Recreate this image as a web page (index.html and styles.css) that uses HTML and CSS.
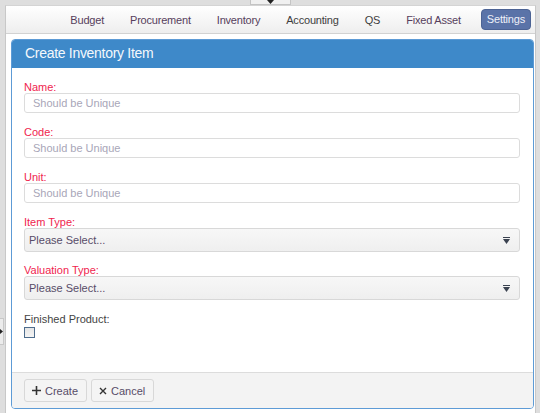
FILE: index.html
```html
<!DOCTYPE html>
<html>
<head>
<meta charset="utf-8">
<link rel="stylesheet" href="styles.css">
</head>
<body>
<div class="topstrip"><div class="handle"><svg width="7" height="4" viewBox="0 0 7 4"><path d="M0 0h7L3.5 4z" fill="#222"/></svg></div></div>
<div class="sidetab"><svg width="3" height="5" viewBox="0 0 3 5"><path d="M0 0v5l3-2.5z" fill="#222"/></svg></div>
<div class="frame">
  <nav class="nav">
    <a class="nav-item visited">Budget</a>
    <a class="nav-item visited">Procurement</a>
    <a class="nav-item visited">Inventory</a>
    <a class="nav-item">Accounting</a>
    <a class="nav-item">QS</a>
    <a class="nav-item visited">Fixed Asset</a>
    <a class="nav-btn">Settings</a>
  </nav>
  <div class="panel">
    <div class="panel-head">Create Inventory Item</div>
    <div class="panel-body">
      <div class="group">
        <label class="lbl req">Name:</label>
        <div class="input">Should be Unique</div>
      </div>
      <div class="group">
        <label class="lbl req">Code:</label>
        <div class="input">Should be Unique</div>
      </div>
      <div class="group">
        <label class="lbl req">Unit:</label>
        <div class="input">Should be Unique</div>
      </div>
      <div class="group sel">
        <label class="lbl req">Item Type:</label>
        <div class="select"><span>Please Select...</span><svg width="7" height="7" viewBox="0 0 7 7"><rect x="0" y="0" width="7" height="1" fill="#3a4250"/><path d="M0 2h7L3.5 7z" fill="#3a4250"/></svg></div>
      </div>
      <div class="group">
        <label class="lbl req">Valuation Type:</label>
        <div class="select"><span>Please Select...</span><svg width="7" height="7" viewBox="0 0 7 7"><rect x="0" y="0" width="7" height="1" fill="#3a4250"/><path d="M0 2h7L3.5 7z" fill="#3a4250"/></svg></div>
      </div>
      <div class="group last">
        <label class="lbl">Finished Product:</label>
        <div class="check"></div>
      </div>
    </div>
    <div class="panel-foot">
      <button class="btn"><svg width="9" height="9" viewBox="0 0 9 9"><path d="M4.5 0v9M0 4.5h9" stroke="#333" stroke-width="1.6"/></svg>Create</button>
      <button class="btn"><svg width="8" height="8" viewBox="0 0 8 8"><path d="M1 1l6 6M7 1L1 7" stroke="#333" stroke-width="1.4"/></svg>Cancel</button>
    </div>
  </div>
</div>
</body>
</html>
```

FILE: styles.css
```css
html, body {
  margin: 0;
  padding: 0;
  height: 100%;
}
body {
  background: #dedede;
  font-family: "Liberation Sans", Arial, sans-serif;
  font-size: 11px;
  color: #4d4458;
  overflow: hidden;
}
.topstrip {
  height: 5px;
  display: flex;
  justify-content: center;
}
.handle {
  width: 41px;
  height: 5px;
  box-sizing: border-box;
  background: #f0f0f0;
  border: 1px solid #c4c4c4;
  border-top: 0;
  display: flex;
  justify-content: center;
  align-items: center;
}
.handle svg { display: block; }
.sidetab {
  position: absolute;
  left: 0;
  top: 318px;
  width: 4px;
  height: 27px;
  background: #ececec;
  border: 1px solid #c8c8c8;
  border-left: 0;
  box-sizing: border-box;
  display: flex;
  align-items: center;
}
.sidetab svg { display: block; }
.frame {
  margin: 0 4px 0 5px;
  height: calc(100% - 5px);
  background: #fff;
  border-left: 1px solid #c8c8c8;
  border-right: 1px solid #c8c8c8;
  border-top: 1px solid #d4d4d4;
  box-sizing: border-box;
}
.nav {
  height: 27px;
  border-bottom: 1px solid #d2d2d2;
  background: linear-gradient(#ffffff, #eeeeee);
  display: flex;
  justify-content: flex-end;
  align-items: center;
  padding-right: 4px;
}
.nav-item {
  padding: 0 13px;
  color: #3e3e3e;
  letter-spacing: -0.2px;
}
.nav-item.visited { color: #563e5c; }
.nav-btn {
  margin-left: 7px;
  height: 21px;
  line-height: 19px;
  padding: 0 5px;
  box-sizing: border-box;
  background: #5a73a8;
  border: 1px solid #4c6394;
  border-radius: 4px;
  color: #eef0f8;
  letter-spacing: -0.2px;
}
.panel {
  margin: 5px 1px 0 5px;
  border: 1px solid #5d9bd6;
  border-radius: 4px;
  overflow: hidden;
}
.panel-head {
  height: 28px;
  line-height: 27px;
  background: #3e89c9;
  color: #f4f8fc;
  font-size: 14px;
  letter-spacing: -0.3px;
  padding-left: 13px;
}
.panel-body {
  padding: 14px 13px 34px 12px;
}
.group { margin-bottom: 14px; }
.group.sel { margin-bottom: 13px; }
.group.last { margin-bottom: 0; }
.lbl {
  display: block;
  height: 11px;
  line-height: 11px;
  color: #444;
}
.lbl.req { color: #f0244e; }
.input {
  height: 20px;
  box-sizing: border-box;
  border: 1px solid #dcdcdc;
  border-radius: 3px;
  padding-left: 8px;
  line-height: 18px;
  color: #a8a6b8;
  font-size: 11px;
}
.select {
  height: 24px;
  box-sizing: border-box;
  border: 1px solid #d8d8d8;
  border-radius: 3px;
  background: linear-gradient(#f7f7f7, #efefef);
  display: flex;
  align-items: center;
  justify-content: space-between;
  padding: 0 9px 0 4px;
  font-size: 11px;
  color: #574c68;
}
.select svg { display: block; }
.check {
  margin-top: 2px;
  width: 11px;
  height: 11px;
  box-sizing: border-box;
  border: 1px solid #4e6c8c;
  background: linear-gradient(#e6e6e6, #f4f4f4);
}
.panel-foot {
  border-top: 1px solid #dcdcdc;
  background: #f3f3f3;
  padding: 6px 12px 6px;
  display: flex;
  gap: 4px;
}
.btn {
  height: 23px;
  box-sizing: border-box;
  border: 1px solid #d8d8d8;
  border-radius: 3px;
  background: #f4f4f4;
  font-family: "Liberation Sans", Arial, sans-serif;
  font-size: 11px;
  color: #574c68;
  display: flex;
  align-items: center;
  gap: 4px;
  padding: 0 8px 0 7px;
}
.btn svg { display: block; }
```
